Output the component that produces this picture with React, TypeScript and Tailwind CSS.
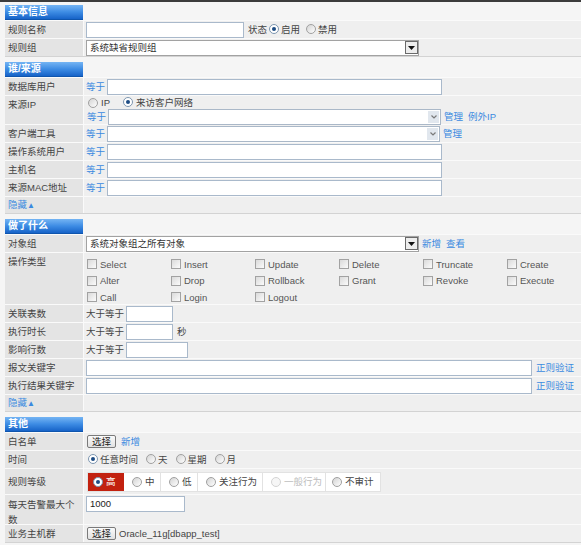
import type { ReactNode } from 'react'

const LINK = 'text-[#3a8ae0]'

function Radio({ checked = false, disabled = false }: { checked?: boolean; disabled?: boolean }) {
  const ring = disabled
    ? 'border-[#d4d4d4] bg-[#f6f6f6]'
    : checked
      ? 'border-[#7d96b0] bg-white'
      : 'border-[#a0a0a0] bg-linear-to-br from-[#d4d4d4] to-white'
  return (
    <span className={`relative inline-block w-[10px] h-[10px] shrink-0 rounded-full border ${ring}`}>
      {checked && <span className="absolute left-[2px] top-[2px] w-[4px] h-[4px] rounded-full bg-[#1d4c84]" />}
    </span>
  )
}

function Check({ label }: { label: string }) {
  return (
    <span className="flex items-center">
      <span className="inline-block w-[10px] h-[10px] shrink-0 border border-[#a2a2a2] bg-linear-to-br from-[#dadada] to-[#fbfbfb]" />
      <span className="ml-[3px] text-[#555]">{label}</span>
    </span>
  )
}

function TextBox({ w, value }: { w: string; value?: string }) {
  return (
    <div className={`${w} h-[16px] shrink-0 bg-white border border-[#a9b9cb] pl-[3px] leading-[14px] text-[#222]`}>
      {value}
    </div>
  )
}

function SelectBox({ w, text, plain }: { w: string; text?: string; plain?: boolean }) {
  return (
    <div
      className={`${w} h-[16px] shrink-0 bg-white border ${plain ? 'border-[#aab8c8]' : 'border-[#a2a2a2]'} flex items-center justify-between pl-[3px]`}
    >
      <span className="text-[#333]">{text}</span>
      {plain ? (
        <span className="w-[11px] h-[12px] mr-[1px] bg-[#e1e7ee] flex items-center justify-center">
          <svg width="6" height="4" viewBox="0 0 6 4">
            <path d="M0.5 0.5L3 3l2.5-2.5" stroke="#7a7a7a" strokeWidth="1.2" fill="none" />
          </svg>
        </span>
      ) : (
        <span className="w-[13px] h-[13px] border border-[#6a6a6a] bg-[#ededed] flex items-center justify-center">
          <svg width="7" height="4" viewBox="0 0 7 4">
            <path d="M0 0h7L3.5 4z" fill="#111" />
          </svg>
        </span>
      )}
    </div>
  )
}

function Btn({ children }: { children: ReactNode }) {
  return (
    <span className="inline-flex items-center h-[13px] px-[4px] border border-[#7a7a7a] rounded-[2px] bg-linear-to-b from-[#fafafa] to-[#e2e2e2] text-[#222] leading-none">
      {children}
    </span>
  )
}

function Row({
  label,
  h,
  top = false,
  children,
}: {
  label: ReactNode
  h: string
  top?: boolean
  children?: ReactNode
}) {
  return (
    <div className={`flex border-t border-[#fafafa] ${h}`}>
      <div
        className={`w-[78px] shrink-0 bg-[#e4e4e4] pl-[3px] text-[#444] flex ${top ? 'items-start pt-[2px] leading-[14px]' : 'items-center'}`}
      >
        {label}
      </div>
      <div className="flex-1 bg-[#efefef] border-l border-[#fafafa] pl-[2px] flex items-center text-[#444]">
        {children}
      </div>
    </div>
  )
}

function Section({ title, first = false, children }: { title: string; first?: boolean; children: ReactNode }) {
  return (
    <div className={first ? 'mt-[3px]' : 'mt-[5px]'}>
      <div className="h-[15px] flex">
        <div className="w-[78px] h-[15px] pl-[3px] bg-linear-to-b from-[#74b4f3] via-[#3d8ce4] to-[#1663c8] border-b border-[#0f55ad] text-white font-bold leading-[14px] text-[10px]">
          {title}
        </div>
      </div>
      {children}
      <div className="h-px bg-[#d3d3d3]" />
    </div>
  )
}

const OPS = [
  'Select', 'Insert', 'Update', 'Delete', 'Truncate', 'Create',
  'Alter', 'Drop', 'Rollback', 'Grant', 'Revoke', 'Execute',
  'Call', 'Login', 'Logout',
]

export default function App() {
  return (
    <div className="w-[581px] h-[545px] overflow-hidden bg-[#f5f5f5] text-[9.5px] leading-none font-['Liberation_Sans','Noto_Sans_CJK_SC',sans-serif]">
      <div className="h-[2px] bg-[#3c3c3c]" />
      <div className="pl-[5px]">
        {/* 基本信息 */}
        <Section title="基本信息" first>
          <Row label="规则名称" h="h-[18px]">
            <TextBox w="w-[158px]" />
            <span className="ml-[4px]">状态</span>
            <span className="ml-[2px]"><Radio checked /></span>
            <span className="ml-[2px]">启用</span>
            <span className="ml-[6px]"><Radio /></span>
            <span className="ml-[2px]">禁用</span>
          </Row>
          <Row label="规则组" h="h-[18px]">
            <SelectBox w="w-[333px]" text="系统缺省规则组" />
          </Row>
        </Section>

        {/* 谁/来源 */}
        <Section title="谁/来源">
          <Row label="数据库用户" h="h-[18px]">
            <span className={LINK}>等于</span>
            <span className="ml-[2px]"><TextBox w="w-[335px]" /></span>
          </Row>
          <Row label="来源IP" h="h-[29px]" top>
            <div className="flex flex-col">
              <div className="h-[13px] flex items-center pl-[2px]">
                <Radio />
                <span className="ml-[3px]">IP</span>
                <span className="ml-[13px]"><Radio checked /></span>
                <span className="ml-[3px]">来访客户网络</span>
              </div>
              <div className="h-[15px] flex items-center">
                <span className={`pl-[1px] ${LINK}`}>等于</span>
                <span className="ml-[2px]"><SelectBox w="w-[333px]" plain /></span>
                <span className={`ml-[3px] ${LINK}`}>管理</span>
                <span className={`ml-[5px] ${LINK}`}>例外IP</span>
              </div>
            </div>
          </Row>
          <Row label="客户端工具" h="h-[18px]">
            <span className={LINK}>等于</span>
            <span className="ml-[2px]"><SelectBox w="w-[333px]" plain /></span>
            <span className={`ml-[3px] ${LINK}`}>管理</span>
          </Row>
          <Row label="操作系统用户" h="h-[18px]">
            <span className={LINK}>等于</span>
            <span className="ml-[2px]"><TextBox w="w-[335px]" /></span>
          </Row>
          <Row label="主机名" h="h-[18px]">
            <span className={LINK}>等于</span>
            <span className="ml-[2px]"><TextBox w="w-[335px]" /></span>
          </Row>
          <Row label="来源MAC地址" h="h-[18px]">
            <span className={LINK}>等于</span>
            <span className="ml-[2px]"><TextBox w="w-[335px]" /></span>
          </Row>
          <Row label={<span className={LINK}>隐藏<span className="text-[8px]">▲</span></span>} h="h-[17px]" />
        </Section>

        {/* 做了什么 */}
        <Section title="做了什么">
          <Row label="对象组" h="h-[18px]">
            <SelectBox w="w-[333px]" text="系统对象组之所有对象" />
            <span className={`ml-[3px] ${LINK}`}>新增</span>
            <span className={`ml-[5px] ${LINK}`}>查看</span>
          </Row>
          <Row label="操作类型" h="h-[52px]" top>
            <div className="self-start pt-[3px] pl-[1px] grid grid-cols-[repeat(6,84px)] auto-rows-[16.5px] items-center">
              {OPS.map((op) => (
                <Check key={op} label={op} />
              ))}
            </div>
          </Row>
          <Row label="关联表数" h="h-[18px]">
            <span>大于等于</span>
            <span className="ml-[2px]"><TextBox w="w-[47px]" /></span>
          </Row>
          <Row label="执行时长" h="h-[18px]">
            <span>大于等于</span>
            <span className="ml-[2px]"><TextBox w="w-[47px]" /></span>
            <span className="ml-[4px]">秒</span>
          </Row>
          <Row label="影响行数" h="h-[18px]">
            <span>大于等于</span>
            <span className="ml-[2px]"><TextBox w="w-[62px]" /></span>
          </Row>
          <Row label="报文关键字" h="h-[18px]">
            <TextBox w="w-[446px]" />
            <span className={`ml-[4px] ${LINK}`}>正则验证</span>
          </Row>
          <Row label="执行结果关键字" h="h-[18px]">
            <TextBox w="w-[446px]" />
            <span className={`ml-[4px] ${LINK}`}>正则验证</span>
          </Row>
          <Row label={<span className={LINK}>隐藏<span className="text-[8px]">▲</span></span>} h="h-[17px]" />
        </Section>

        {/* 其他 */}
        <Section title="其他">
          <Row label="白名单" h="h-[18px]">
            <span className="ml-[1px]"><Btn>选择</Btn></span>
            <span className={`ml-[5px] ${LINK}`}>新增</span>
          </Row>
          <Row label="时间" h="h-[18px]">
            <span className="ml-[2px]"><Radio checked /></span>
            <span className="ml-[2px]">任意时间</span>
            <span className="ml-[8px]"><Radio /></span>
            <span className="ml-[2px]">天</span>
            <span className="ml-[8px]"><Radio /></span>
            <span className="ml-[2px]">星期</span>
            <span className="ml-[8px]"><Radio /></span>
            <span className="ml-[2px]">月</span>
          </Row>
          <Row label="规则等级" h="h-[26px]">
            <div className="ml-[1px] flex h-[20px] border border-[#e2e2e2] bg-white">
              <div className="w-[36px] flex items-center pl-[5px] bg-[#c2210f] text-white">
                <Radio checked />
                <span className="ml-[3px]">高</span>
              </div>
              <div className="w-[37px] flex items-center pl-[8px] border-r border-[#e2e2e2]">
                <Radio />
                <span className="ml-[3px]">中</span>
              </div>
              <div className="w-[37px] flex items-center pl-[8px] border-r border-[#e2e2e2]">
                <Radio />
                <span className="ml-[3px]">低</span>
              </div>
              <div className="w-[65px] flex items-center pl-[8px] border-r border-[#e2e2e2]">
                <Radio />
                <span className="ml-[3px]">关注行为</span>
              </div>
              <div className="w-[63px] flex items-center pl-[8px] border-r border-[#e2e2e2] text-[#bdbdbd]">
                <Radio disabled />
                <span className="ml-[3px]">一般行为</span>
              </div>
              <div className="w-[54px] flex items-center pl-[6px]">
                <Radio />
                <span className="ml-[3px]">不审计</span>
              </div>
            </div>
          </Row>
          <Row label={<span className="block w-[72px] leading-[15px]">每天告警最大个数</span>} h="h-[30px]" top>
            <div className="self-start pt-[1px]">
              <TextBox w="w-[99px]" value="1000" />
            </div>
          </Row>
          <Row label="业务主机群" h="h-[18px]">
            <span className="ml-[1px]"><Btn>选择</Btn></span>
            <span className="ml-[3px] text-[#444]">Oracle_11g[dbapp_test]</span>
          </Row>
        </Section>
      </div>
    </div>
  )
}
